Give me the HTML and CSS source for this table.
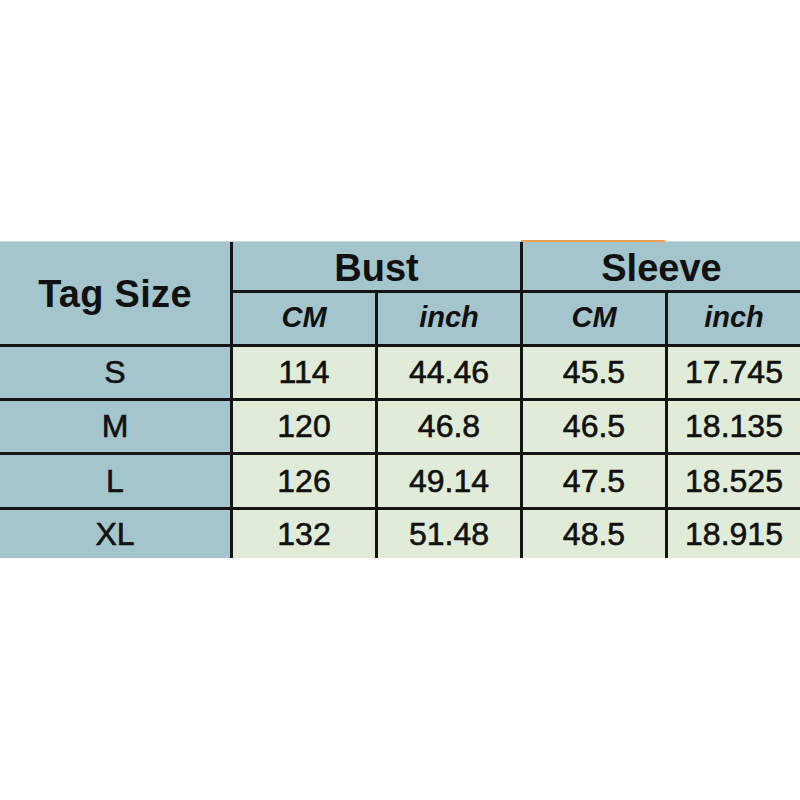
FILE: index.html
```html
<!DOCTYPE html>
<html>
<head>
<meta charset="utf-8">
<link rel="stylesheet" href="styles.css">
</head>
<body>
<div class="page">
  <div class="chart">
    <div class="accent"></div>
    <div class="cell head tag">Tag Size</div>
    <div class="cell head group">Bust</div>
    <div class="cell head group">Sleeve</div>
    <div class="cell head unit">CM</div>
    <div class="cell head unit">inch</div>
    <div class="cell head unit">CM</div>
    <div class="cell head unit">inch</div>

    <div class="cell size">S</div>
    <div class="cell val">114</div>
    <div class="cell val">44.46</div>
    <div class="cell val">45.5</div>
    <div class="cell val">17.745</div>

    <div class="cell size">M</div>
    <div class="cell val">120</div>
    <div class="cell val">46.8</div>
    <div class="cell val">46.5</div>
    <div class="cell val">18.135</div>

    <div class="cell size">L</div>
    <div class="cell val">126</div>
    <div class="cell val">49.14</div>
    <div class="cell val">47.5</div>
    <div class="cell val">18.525</div>

    <div class="cell size">XL</div>
    <div class="cell val">132</div>
    <div class="cell val">51.48</div>
    <div class="cell val">48.5</div>
    <div class="cell val">18.915</div>
  </div>
</div>
</body>
</html>
```

FILE: styles.css
```css
html, body {
  margin: 0;
  padding: 0;
  background: #ffffff;
}

.page {
  width: 800px;
  height: 800px;
  padding-top: 241px;
  box-sizing: border-box;
}

.chart {
  position: relative;
  display: grid;
  grid-template-columns: 230px 142px 142px 142px 132px;
  grid-template-rows: 48px 51px 51px 51px 52px 48px;
  gap: 3px;
  background: #141414;
  border-top: 1px solid #c4d8dd;
  font-family: "Liberation Sans", Arial, sans-serif;
  color: #111111;
}

.accent {
  position: absolute;
  left: 521px;
  top: -2px;
  width: 144px;
  height: 2px;
  background: #f0a050;
}

.cell {
  display: flex;
  align-items: center;
  justify-content: center;
  background: #e0ecd7;
}

.head,
.size {
  background: #a5c5cc;
}

.tag {
  grid-row: 1 / span 2;
  font-size: 38px;
  font-weight: bold;
  letter-spacing: 0.3px;
  padding-top: 2px;
}

.group {
  grid-column: span 2;
  font-size: 38px;
  font-weight: bold;
  padding-top: 4px;
}

.unit {
  font-size: 29px;
  font-weight: bold;
  font-style: italic;
  padding-bottom: 2px;
}

.size,
.val {
  font-size: 32px;
  -webkit-text-stroke: 0.6px #111111;
}
```
